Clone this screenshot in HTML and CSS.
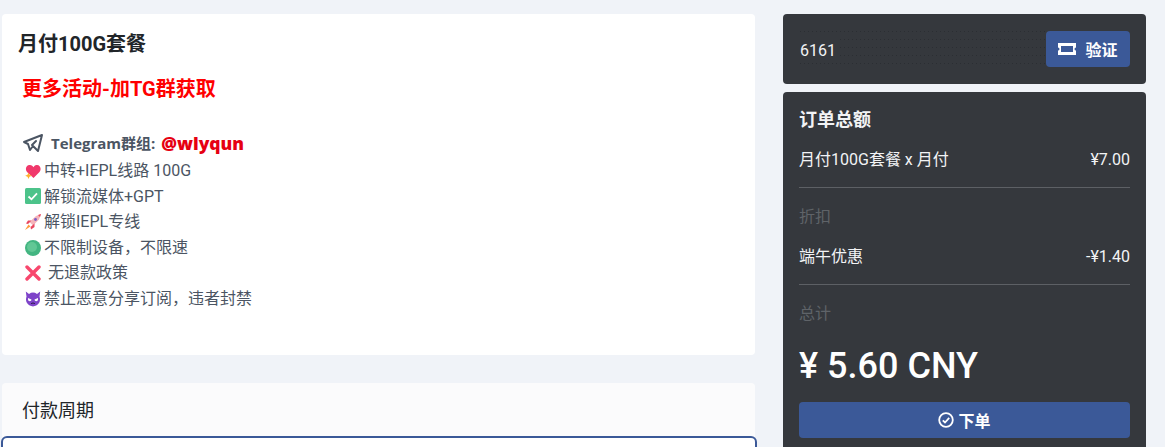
FILE: index.html
```html
<!DOCTYPE html>
<html lang="zh-CN">
<head>
    <meta charset="UTF-8">
    <meta name="viewport" content="width=device-width, initial-scale=1.0">
    <title>月付100G套餐</title>
    <link rel="stylesheet" href="styles.css">
</head>
<body>
    <div class="page">
        <div class="main-col">
            <div class="plan-card">
                <h3 class="plan-title">月付100G套餐</h3>
                <div class="plan-body">
                    <h3 class="promo">更多活动-加TG群获取</h3>
                    <p class="tg-line">
                        <svg class="tg-icon" viewBox="0 0 24 24" fill="none" stroke="#4b5563" stroke-width="2" stroke-linejoin="round" stroke-linecap="round">
                            <path d="M15 10l-4 4l6 6l4 -16l-18 7l4 2l2 6l3 -4"/>
                        </svg>
                        <strong>Telegram群组:</strong>
                        <strong class="tg-handle">@wlyqun</strong>
                    </p>
                    <ul class="features">
                        <li>
                            <svg class="emoji" viewBox="0 0 16 16"><path fill="#f0386b" d="M8.500 15 2 9C-.5 6 1.500 1.500 5 2c1.500.2 3 1 3.500 2.200C9 3 10 2.200 11.500 2c3.500-.5 5.500 4 3 7z"/><path fill="#ffb02e" d="m3.500 9.500 1 2.300 2.300 1-2.300 1-1 2.200-1-2.200-2.300-1 2.300-1z"/></svg>
                            <span>中转+IEPL线路 100G</span>
                        </li>
                        <li>
                            <svg class="emoji" viewBox="0 0 16 16"><rect width="16" height="16" rx="1.500" fill="#4cc38a"/><path d="m3.500 8.500 3 2.800 5.500-6" fill="none" stroke="#fff" stroke-width="1.800"/></svg>
                            <span>解锁流媒体+GPT</span>
                        </li>
                        <li>
                            <svg class="emoji" viewBox="0 0 16 16"><path fill="#f4b4ba" d="M4.500 8 11 2 16 0l-2 5.500L8 11.500z"/><path fill="#e9475f" d="M13 1 16 0l-1 3zM3 6.500h3.500L3 10 1 9.500zM9.500 9.500V13L6 15.500 5.500 13z"/><path fill="#ff9a3c" d="M3.500 10.500l2 2L0 16z"/><circle cx="10.500" cy="5.500" r="1.400" fill="#7c5cc4"/></svg>
                            <span>解锁IEPL专线</span>
                        </li>
                        <li>
                            <svg class="emoji" viewBox="0 0 16 16"><circle cx="8" cy="8" r="8" fill="#43b581"/><circle cx="7" cy="7" r="5" fill="#62c795"/></svg>
                            <span>不限制设备，不限速</span>
                        </li>
                        <li>
                            <svg class="emoji" viewBox="0 0 16 16"><path d="m2 2 12 12m0-12L2 14" stroke="#f8476d" stroke-width="3.400" stroke-linecap="round"/></svg>
                            <span class="nudge">无退款政策</span>
                        </li>
                        <li>
                            <svg class="emoji" viewBox="0 0 16 16"><path fill="#7e44c9" d="M.8.500 4 3a7 7 0 0 1 8 0l3.200-2.500-.7 5.300A7 7 0 1 1 1.500 5.800z"/><path fill="#fff" d="M3 7l3.500 1.500a1.700 1.700 0 1 1-3.500 0zM13 7 9.500 8.500a1.700 1.700 0 1 0 3.500 0z"/><path d="M6 12.800c1-1 3-1 4 0" stroke="#2e1a4d" fill="none"/></svg>
                            <span>禁止恶意分享订阅，违者封禁</span>
                        </li>
                    </ul>
                </div>
            </div>

            <div class="period-card">
                <h4 class="period-title">付款周期</h4>
                <div class="period-option"></div>
            </div>
        </div>

        <div class="side-col">
            <div class="dark-card coupon">
                <div class="coupon-field">
                    <span class="coupon-code">6161</span>
                </div>
                <button class="btn btn-check">
                    <svg class="ticket" viewBox="0 0 18 12"><path fill="#fff" fill-rule="evenodd" d="M0 0h18v4.500a1.500 1.500 0 0 0 0 3V12H0V7.500a1.500 1.500 0 0 0 0-3zm3 3v6h12V3z"/></svg>
                    验证
                </button>
            </div>

            <div class="dark-card summary">
                <h4 class="summary-title">订单总额</h4>
                <div class="row">
                    <span>月付100G套餐 x 月付</span>
                    <span>¥7.00</span>
                </div>
                <hr>
                <div class="muted">折扣</div>
                <div class="row row-discount">
                    <span>端午优惠</span>
                    <span>-¥1.40</span>
                </div>
                <hr>
                <div class="muted">总计</div>
                <div class="total">¥ 5.60 CNY</div>
                <button class="btn btn-order">
                    <svg class="check" viewBox="0 0 16 16" fill="none" stroke="#fff"><circle cx="8" cy="8" r="6.800" stroke-width="1.800"/><path d="m4.800 8.300 2.200 2.200 4.200-4.600" stroke-width="1.800"/></svg>
                    下单
                </button>
            </div>
        </div>
    </div>
</body>
</html>
```
FILE: styles.css
```css
html, body {
    margin: 0;
    height: 447px;
    overflow: hidden;
}
body {
    background: #f0f3f8;
    font-family: Roboto, "Noto Sans CJK SC", sans-serif;
    font-size: 16px;
    color: #4b5563;
}
.page {
    display: grid;
    grid-template-columns: 753px 363px;
    column-gap: 28px;
    padding: 14px 0 0 2px;
}
.plan-card {
    background: #fff;
    border-radius: 4px;
    height: 341px;
    padding: 16px;
    box-sizing: border-box;
}
.plan-title {
    margin: 0;
    font-size: 20px;
    line-height: 28px;
    font-weight: 700;
    color: #212529;
}
.plan-body {
    padding: 0 4px;
}
.promo {
    margin: 17px 0 0;
    font-size: 20px;
    line-height: 28px;
    font-weight: 700;
    color: #f00;
}
.tg-line {
    margin: 26px 0 0 -1px;
    height: 28px;
    display: flex;
    align-items: center;
    gap: 6px;
    font-family: "Open Sans", "Noto Sans CJK SC", sans-serif;
    font-size: 15px;
    line-height: 28px;
}
.tg-icon {
    width: 24px;
    height: 24px;
}
.tg-handle {
    font-size: 17.500px;
    font-weight: 800;
    color: #e60012;
}
.features {
    list-style: none;
    margin: 1px 0 0;
    padding: 0;
}
.features li {
    height: 25.600px;
    line-height: 25.600px;
    display: flex;
    align-items: center;
    gap: 3px;
}
.nudge {
    margin-left: 4px;
}
.emoji {
    width: 16px;
    height: 16px;
    margin-left: 3px;
    flex: none;
}
.period-card {
    margin-top: 28px;
    background: #fbfbfc;
    border-radius: 4px 4px 0 0;
    height: 64px;
}
.period-title {
    margin: 0;
    padding: 15px 20px 0;
    font-size: 18px;
    line-height: 26px;
    font-weight: 400;
    color: #212529;
}
.period-option {
    margin: 12px -2px 0 -1px;
    height: 20px;
    background: #fff;
    border: 2px solid #3b5998;
    border-radius: 6px;
    box-sizing: border-box;
}
.dark-card {
    background: #35383d;
    border-radius: 4px;
    color: #f2f3f5;
}
.coupon {
    height: 70px;
    padding: 17px 16px 17px 17px;
    box-sizing: border-box;
    display: flex;
    align-items: center;
}
/* faint dotted placeholder behind the code */
.coupon-field {
    flex: 1;
    height: 36px;
    display: flex;
    align-items: center;
    background-image:
        linear-gradient(to bottom, transparent 1px, #35383d 1px),
        linear-gradient(to right, #2b2e33 1px, transparent 1px);
    background-size: 4px 8px;
    background-position: 0 8px;
}
.coupon-code {
    font-size: 16px;
    line-height: 22px;
    background: #35383d;
    padding: 3px 3px 0 0;
}
.btn {
    background: #3b5998;
    border: none;
    border-radius: 4px;
    color: #fff;
    font-family: inherit;
    font-size: 16px;
    font-weight: 700;
    display: flex;
    align-items: center;
    justify-content: center;
}
.btn-check {
    flex: none;
    width: 84px;
    height: 36px;
    gap: 9px;
}
.ticket {
    width: 18px;
    height: 12px;
}
.summary {
    margin-top: 8px;
    height: 360px;
    padding: 16px;
    box-sizing: border-box;
}
.summary-title {
    margin: 0;
    font-size: 18px;
    line-height: 24px;
    font-weight: 700;
}
.row {
    display: flex;
    justify-content: space-between;
    margin-top: 17px;
    font-size: 16px;
    line-height: 22px;
}
hr {
    border: none;
    border-top: 1px solid #5d6065;
    margin: 16px 0 0;
}
.muted {
    margin-top: 18px;
    line-height: 22px;
    color: #5f6368;
}
.row-discount {
    margin-top: 18px;
}
.total {
    margin-top: 17px;
    font-size: 36px;
    line-height: 48px;
    font-weight: 500;
    color: #fff;
}
.btn-order {
    width: 100%;
    height: 36px;
    margin-top: 12px;
    gap: 4px;
}
.check {
    width: 16px;
    height: 16px;
}
```
